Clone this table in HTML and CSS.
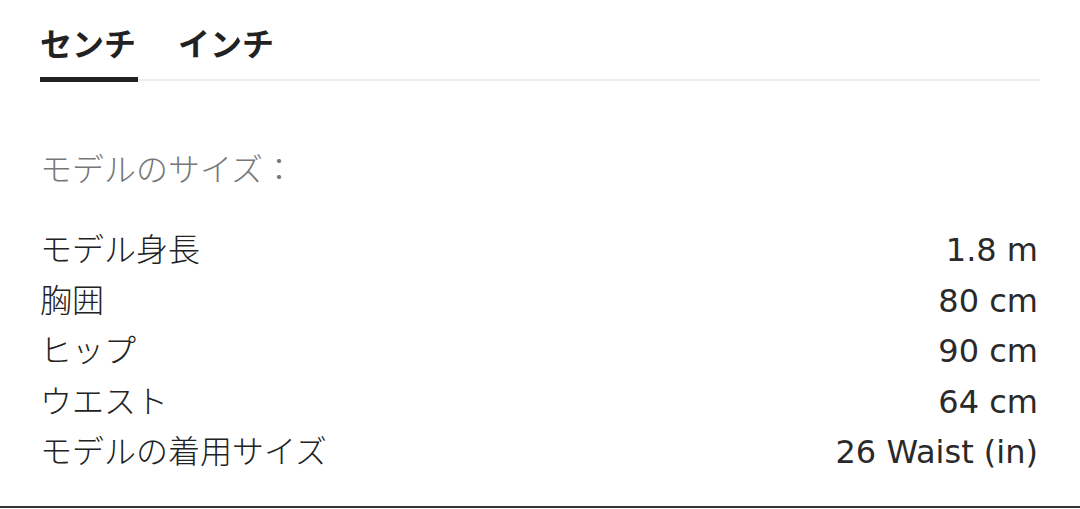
FILE: index.html
```html
<!DOCTYPE html>
<html lang="ja">
<head>
  <meta charset="UTF-8">
  <meta name="viewport" content="width=device-width, initial-scale=1.0">
  <title>サイズガイド</title>
  <link rel="stylesheet" href="styles.css">
</head>
<body>
  <div class="size-guide">
    <!-- Unit tabs -->
    <div class="unit-tabs">
      <div class="unit-tab active">センチ</div>
      <div class="unit-tab">インチ</div>
    </div>

    <!-- Model size section -->
    <h2 class="model-title">モデルのサイズ：</h2>
    <div class="model-rows">
      <div class="model-row"><span>モデル身長</span><span class="value">1.8 m</span></div>
      <div class="model-row"><span>胸囲</span><span class="value">80 cm</span></div>
      <div class="model-row"><span>ヒップ</span><span class="value">90 cm</span></div>
      <div class="model-row"><span>ウエスト</span><span class="value">64 cm</span></div>
      <div class="model-row"><span>モデルの着用サイズ</span><span class="value">26 Waist (in)</span></div>
    </div>
  </div>
  <div class="footer-bar"></div>
</body>
</html>
```

FILE: styles.css
```css
body {
  margin: 0;
  padding: 0;
  background-color: #fff;
  color: #222;
  font-family: "Noto Sans CJK JP", "Noto Sans", sans-serif;
}

.size-guide {
  padding: 0 40px;
}

.unit-tabs {
  display: flex;
  gap: 40px;
  border-bottom: 2px solid #eeeeee;
}

.unit-tab {
  padding-top: 22px;
  padding-bottom: 15px;
  line-height: 40px;
  font-size: 32px;
  font-weight: bold;
  color: #222;
  border-bottom: 5px solid transparent;
  margin-bottom: -3px;
  width: 98px;
}

.unit-tab.active {
  border-bottom-color: #222;
}

.model-title {
  margin: 66px 0 0;
  font-size: 32px;
  line-height: 40px;
  font-weight: 300;
  color: #777;
}

.model-rows {
  margin-top: 35px;
}

.model-row {
  display: flex;
  justify-content: space-between;
  align-items: baseline;
  height: 50.5px;
  font-size: 32px;
  line-height: 50.5px;
  font-weight: 300;
  color: #222;
}

.model-row .value {
  font-family: "DejaVu Sans", "Noto Sans CJK JP", sans-serif;
  font-size: 32px;
  font-weight: normal;
  color: #2a2a2a;
  padding-right: 2px;
}

.footer-bar {
  margin-top: 31px;
  border-top: 2px solid #333;
}
```
